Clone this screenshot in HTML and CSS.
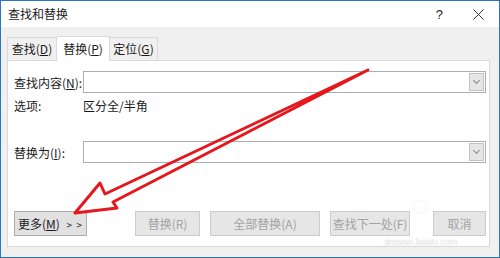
FILE: index.html
```html
<!DOCTYPE html>
<html lang="zh-CN">
<head>
  <meta charset="UTF-8" />
  <title>查找和替换</title>
  <link rel="stylesheet" href="styles.css">
</head>
<body>

  <!-- Find & replace dialog -->
  <div class="dialog">
    <div class="titlebar">
      <span class="title">查找和替换</span>
      <span class="help">?</span>
      <svg class="close" width="11" height="11" viewBox="0 0 11 11">
        <path d="M0.5 0.5 L10.5 10.5 M10.5 0.5 L0.5 10.5" stroke="#333" stroke-width="1" fill="none"/>
      </svg>
    </div>

    <div class="body">
      <!-- Tabs -->
      <div class="tabs">
        <div class="tab">查找(<u>D</u>)</div>
        <div class="tab active">替换(<u>P</u>)</div>
        <div class="tab">定位(<u>G</u>)</div>
      </div>

      <!-- Tab panel -->
      <div class="panel">
        <div class="row">
          <label class="label">查找内容(<u>N</u>):</label>
          <div class="combo"><span class="drop"><i class="chev"></i></span></div>
        </div>

        <div class="row opts">
          <span class="label">选项:</span>
          <span>区分全/半角</span>
        </div>

        <div class="row replace">
          <label class="label">替换为(<u>I</u>):</label>
          <div class="combo"><span class="drop"><i class="chev"></i></span></div>
        </div>

        <div class="buttons">
          <button class="btn more">更多(<u>M</u>) <span class="gt">&gt; &gt;</span></button>
          <button class="btn off b-replace">替换(R)</button>
          <button class="btn off b-all">全部替换(A)</button>
          <button class="btn off b-next">查找下一处(F)</button>
          <button class="btn off b-cancel">取消</button>
        </div>
      </div>
    </div>

    <!-- Watermark -->
    <div class="watermark">
      <span class="wm-paw"></span>
      <span class="wm-url">jingyan.baidu.com</span>
    </div>

    <!-- Red annotation arrow -->
    <svg class="arrow" width="500" height="258" viewBox="0 0 500 258">
      <polygon points="75,213 100,183 105,194 368,70 113,202 117,208"
               fill="none" stroke="#e5171c" stroke-width="3" stroke-linejoin="round"/>
    </svg>
  </div>

</body>
</html>
```

FILE: styles.css
```css
* {
  box-sizing: border-box;
}

body {
  margin: 0;
  font-family: "Noto Sans CJK SC", "Noto Sans", sans-serif;
  font-size: 12px;
  color: #1a1a1a;
}

.dialog {
  position: relative;
  width: 500px;
  height: 258px;
  border: 1px solid #2b78b8;
  background: #f0f0f0;
  display: flex;
  flex-direction: column;
}

/* Title bar */
.titlebar {
  height: 26px;
  background: #fff;
  display: flex;
  align-items: center;
  padding: 0 0 0 7px;
}

.title {
  flex: 1;
  line-height: 26px;
}

.help {
  font-family: "Liberation Sans", sans-serif;
  font-size: 13px;
  margin-right: 30px;
}

.close {
  margin-right: 15px;
}

/* Tabs */
.body {
  flex: 1;
  padding: 8px 9px 10px 6px;
  display: flex;
  flex-direction: column;
}

.tabs {
  display: flex;
  height: 25px;
  align-items: flex-end;
}

.tab {
  height: 23px;
  line-height: 22px;
  border: 1px solid #d9d9d9;
  border-bottom: none;
  background: #f0f0f0;
  text-align: center;
}

.tab:nth-child(1) { width: 50px; }
.tab:nth-child(3) { width: 48px; border-left: none; }

.tab.active {
  width: 53px;
  height: 25px;
  line-height: 24px;
  background: #fff;
  border-left: none;
  position: relative;
  margin-bottom: -1px;
  z-index: 1;
}

.panel {
  flex: 1;
  background: #fff;
  border: 1px solid #d9d9d9;
  padding: 10px 3px 10px 6px;
}

/* Form rows */
.row {
  display: flex;
  align-items: center;
}

.label {
  width: 69px;
  flex-shrink: 0;
}

.combo {
  flex: 1;
  height: 22px;
  border: 1px solid #abadb3;
  display: flex;
  justify-content: flex-end;
  padding: 1px;
}

.drop {
  width: 15px;
  background: #e6e6e6;
  border: 1px solid #c2c2c2;
  display: flex;
  align-items: center;
  justify-content: center;
}

.chev {
  width: 5px;
  height: 5px;
  border-right: 1px solid #888;
  border-bottom: 1px solid #888;
  transform: rotate(45deg);
  margin-top: -3px;
}

.opts {
  margin-top: 4px;
  height: 16px;
}

.replace {
  margin-top: 28px;
}

/* Buttons */
.buttons {
  margin-top: 48px;
  display: flex;
}

.btn {
  height: 25px;
  font: inherit;
  background: #e1e1e1;
  border: 1px solid #adadad;
  color: #1a1a1a;
  padding: 0;
  margin-left: 10px;
}

.btn .gt {
  font-size: 10px;
  margin-left: 4px;
  letter-spacing: 1px;
}

.btn.off {
  color: #a3a3a3;
  border-color: #cccccc;
  background: #e6e6e6;
}

.more { width: 73px; margin-left: 0; }
.b-replace { width: 65px; margin-left: 48px; }
.b-all { width: 110px; }
.b-next { width: 80px; }
.b-cancel { width: 53px; margin-left: 23px; }

/* Watermark overlay */
.watermark {
  position: absolute;
  left: 384px;
  top: 200px;
  width: 90px;
  font-family: "Liberation Sans", sans-serif;
  pointer-events: none;
}

.wm-paw {
  display: block;
  width: 14px;
  height: 12px;
  margin-left: 28px;
  border-radius: 50%;
  background: rgba(255, 255, 255, 0.6);
  box-shadow: 0 0 1px rgba(120, 120, 120, 0.4);
}

.wm-url {
  display: block;
  margin-top: 24px;
  font-size: 9px;
  color: rgba(255, 255, 255, 0.8);
  text-shadow: 0 0 1px rgba(140, 140, 140, 0.5);
}

.arrow {
  position: absolute;
  left: -1px;
  top: -1px;
  pointer-events: none;
}
```
